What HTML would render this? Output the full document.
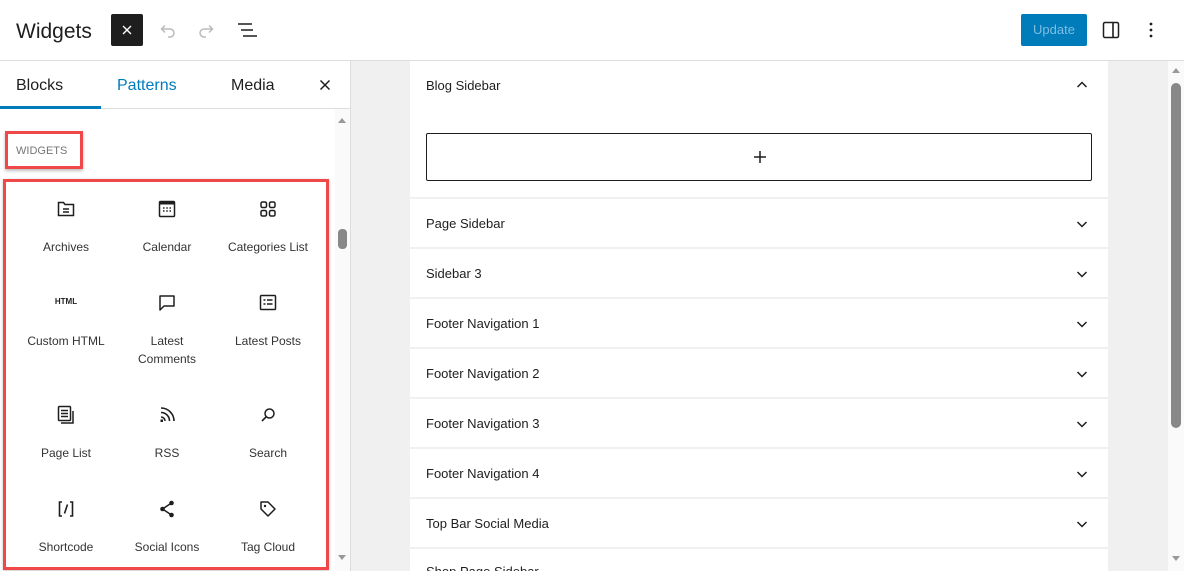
<!DOCTYPE html>
<html><head><style>
*{box-sizing:border-box;margin:0;padding:0}
body{width:1184px;height:571px;overflow:hidden;font-family:"Liberation Sans",sans-serif;background:#fff;position:relative;color:#1e1e1e}
.abs{position:absolute}
.hdr{left:0;top:0;width:1184px;height:61px;border-bottom:1px solid #ddd;background:#fff}
.tab{position:absolute;top:77px;font-size:16px}
.item{position:absolute;width:100px;text-align:center;font-size:12px;color:#333;line-height:18px}
.item svg{display:block;margin:0 auto}
.sec{position:absolute;left:410px;width:698px;height:48px;background:#fff;font-size:13px;color:#1e1e1e}
.sec span{position:absolute;left:16px;top:17px}
.sec svg{position:absolute;right:20px;top:19px}
</style></head><body>
<div class="abs hdr"></div>
<div class="abs" style="left:16px;top:20px;font-size:21px;color:#1e1e1e">Widgets</div>
<div class="abs" style="left:111px;top:14px;width:32px;height:32px;background:#1e1e1e;border-radius:2px"><svg width="32" height="32"><path d="M12 12l8 8M20 12l-8 8" stroke="#fff" stroke-width="1.4"/></svg></div>
<svg class="abs" style="left:156px;top:20px" width="22" height="22"><path d="M6 9h8a4 4 0 010 8h-2M9 5.5L5.5 9 9 12.5" fill="none" stroke="#bbb" stroke-width="1.5"/></svg>
<svg class="abs" style="left:196px;top:20px" width="22" height="22"><path d="M16 9H8a4 4 0 000 8h2M13 5.5L16.5 9 13 12.5" fill="none" stroke="#bbb" stroke-width="1.5"/></svg>
<svg class="abs" style="left:236px;top:20px" width="22" height="22"><path d="M2 4h14M5 10h12M7 16h14" stroke="#1e1e1e" stroke-width="1.6"/></svg>
<div class="abs" style="left:1021px;top:14px;width:66px;height:32px;background:#007cba;border-radius:2px;color:#7fbde2;font-size:13px;text-align:center;line-height:32px">Update</div>
<svg class="abs" style="left:1101px;top:20px" width="20" height="20"><rect x="2.5" y="2.5" width="15" height="15" rx="1.5" fill="none" stroke="#1e1e1e" stroke-width="1.5"/><path d="M12 2.5v15" stroke="#1e1e1e" stroke-width="1.6"/></svg>
<svg class="abs" style="left:1145px;top:20px" width="12" height="20"><circle cx="6" cy="4" r="1.4" fill="#1e1e1e"/><circle cx="6" cy="10" r="1.4" fill="#1e1e1e"/><circle cx="6" cy="16" r="1.4" fill="#1e1e1e"/></svg>

<div class="abs" style="left:350px;top:61px;width:1px;height:510px;background:#ddd"></div>
<div class="tab" style="left:16px">Blocks</div>
<div class="tab" style="left:117px;color:#007cba">Patterns</div>
<div class="tab" style="left:231px">Media</div>
<svg class="abs" style="left:319px;top:79px" width="12" height="12"><path d="M1.5 1.5l9 9M10.5 1.5l-9 9" stroke="#1e1e1e" stroke-width="1.5"/></svg>
<div class="abs" style="left:0;top:108px;width:350px;height:1px;background:#ddd"></div>
<div class="abs" style="left:0;top:106px;width:101px;height:3px;background:#007cba"></div>
<div class="abs" style="left:335px;top:109px;width:15px;height:462px;background:#fafafa"></div>
<div class="abs" style="left:338px;top:118px;width:0;height:0;border-left:4px solid transparent;border-right:4px solid transparent;border-bottom:5px solid #999"></div>
<div class="abs" style="left:338px;top:555px;width:0;height:0;border-left:4px solid transparent;border-right:4px solid transparent;border-top:5px solid #999"></div>
<div class="abs" style="left:338px;top:229px;width:9px;height:20px;background:#888;border-radius:4px"></div>

<div class="abs" style="left:5px;top:131px;width:78px;height:38px;border:3px solid #f04848;box-shadow:0 2px 3px rgba(0,0,0,.25)"></div>
<div class="abs" style="left:16px;top:145px;font-size:11px;color:#757575">WIDGETS</div>
<div class="abs" style="left:3px;top:179px;width:326px;height:391px;border:3px solid #f04848;box-shadow:0 1px 3px rgba(0,0,0,.25)"></div>

<div class="item" style="left:16px;top:197px"><svg width="24" height="24"><path d="M4.5 5.5h5l1.5 2h8.5v11h-15z" fill="none" stroke="#1e1e1e" stroke-width="1.5"/><path d="M9 12h6M9 15h6" stroke="#1e1e1e" stroke-width="1.5"/></svg><div style="margin-top:17px">Archives</div></div>
<div class="item" style="left:117px;top:197px"><svg width="24" height="24"><rect x="4.5" y="4.5" width="15" height="15" rx="1" fill="none" stroke="#1e1e1e" stroke-width="1.5"/><rect x="4.5" y="4.5" width="15" height="3" fill="#1e1e1e"/><path d="M8 11h1.5M11.3 11h1.5M14.5 11h1.5M8 14h1.5M11.3 14h1.5M14.5 14h1.5" stroke="#1e1e1e" stroke-width="1.5"/></svg><div style="margin-top:17px">Calendar</div></div>
<div class="item" style="left:218px;top:197px"><svg width="24" height="24"><rect x="5" y="5" width="5.5" height="5.5" rx="1.5" fill="none" stroke="#1e1e1e" stroke-width="1.5"/><rect x="13.5" y="5" width="5.5" height="5.5" rx="1.5" fill="none" stroke="#1e1e1e" stroke-width="1.5"/><rect x="5" y="13.5" width="5.5" height="5.5" rx="1.5" fill="none" stroke="#1e1e1e" stroke-width="1.5"/><rect x="13.5" y="13.5" width="5.5" height="5.5" rx="1.5" fill="none" stroke="#1e1e1e" stroke-width="1.5"/></svg><div style="margin-top:17px">Categories List</div></div>

<div class="item" style="left:16px;top:291px"><div style="height:24px;font-size:8px;font-weight:bold;line-height:22px;color:#1e1e1e">HTML</div><div style="margin-top:17px">Custom HTML</div></div>
<div class="item" style="left:117px;top:291px"><svg width="24" height="24"><path d="M5 5h14v10H9l-4 4z" fill="none" stroke="#1e1e1e" stroke-width="1.5" stroke-linejoin="round"/></svg><div style="margin-top:17px">Latest<br>Comments</div></div>
<div class="item" style="left:218px;top:291px"><svg width="24" height="24"><rect x="4.5" y="4.5" width="15" height="14" rx="1" fill="none" stroke="#1e1e1e" stroke-width="1.5"/><path d="M7.5 9h2M11 9h5.5M7.5 13h2M11 13h5.5" stroke="#1e1e1e" stroke-width="1.5"/></svg><div style="margin-top:17px">Latest Posts</div></div>

<div class="item" style="left:16px;top:403px"><svg width="24" height="24"><rect x="4.5" y="3.5" width="12" height="14" rx="1" fill="none" stroke="#1e1e1e" stroke-width="1.5"/><path d="M7 7.5h7M7 10.5h7M7 13.5h7M19 8v12H7" fill="none" stroke="#1e1e1e" stroke-width="1.5"/></svg><div style="margin-top:17px">Page List</div></div>
<div class="item" style="left:117px;top:403px"><svg width="24" height="24"><path d="M6 5a13 13 0 0113 13M6 9.5a8.5 8.5 0 018.5 8.5M6 14a4 4 0 014 4" fill="none" stroke="#1e1e1e" stroke-width="1.6"/><rect x="5.5" y="16.5" width="2.5" height="2.5" fill="#1e1e1e"/></svg><div style="margin-top:17px">RSS</div></div>
<div class="item" style="left:218px;top:403px"><svg width="24" height="24"><circle cx="13.5" cy="10.5" r="4.5" fill="none" stroke="#1e1e1e" stroke-width="1.5"/><path d="M10.3 13.7L6 18" stroke="#1e1e1e" stroke-width="1.6"/></svg><div style="margin-top:17px">Search</div></div>

<div class="item" style="left:16px;top:497px"><svg width="24" height="24"><path d="M8 5H5.5v14H8M16 5h2.5v14H16M13.5 7.5l-3 9" fill="none" stroke="#1e1e1e" stroke-width="1.6"/></svg><div style="margin-top:17px">Shortcode</div></div>
<div class="item" style="left:117px;top:497px"><svg width="24" height="24"><path d="M16.5 6L7.5 12l9 6" fill="none" stroke="#1e1e1e" stroke-width="1.5"/><circle cx="16.5" cy="6" r="2.3" fill="#1e1e1e"/><circle cx="7.5" cy="12" r="2.3" fill="#1e1e1e"/><circle cx="16.5" cy="18" r="2.3" fill="#1e1e1e"/></svg><div style="margin-top:17px">Social Icons</div></div>
<div class="item" style="left:218px;top:497px"><svg width="24" height="24"><path d="M5 5h7l7 7-7 7-7-7z" fill="none" stroke="#1e1e1e" stroke-width="1.5" stroke-linejoin="round"/><circle cx="9" cy="9" r="1.2" fill="#1e1e1e"/></svg><div style="margin-top:17px">Tag Cloud</div></div>

<div class="abs" style="left:351px;top:61px;width:817px;height:510px;background:#f0f0f0"></div>
<div class="abs" style="left:1168px;top:61px;width:16px;height:510px;background:#fafafa"></div>
<div class="abs" style="left:1172px;top:68px;width:0;height:0;border-left:4px solid transparent;border-right:4px solid transparent;border-bottom:5px solid #999"></div>
<div class="abs" style="left:1172px;top:556px;width:0;height:0;border-left:4px solid transparent;border-right:4px solid transparent;border-top:5px solid #999"></div>
<div class="abs" style="left:1171px;top:83px;width:10px;height:345px;background:#888;border-radius:5px"></div>

<div class="sec" style="top:61px;height:136px"><span style="top:17px">Blog Sidebar</span><svg width="12" height="12" style="top:18px"><path d="M1.5 8l4.5-4.5L10.5 8" fill="none" stroke="#1e1e1e" stroke-width="1.5"/></svg>
<div style="position:absolute;left:16px;top:72px;width:666px;height:48px;border:1px solid #1e1e1e;border-radius:2px"><svg width="14" height="14" style="position:absolute;left:326px;top:16px"><path d="M7 1v12M1 7h12" stroke="#1e1e1e" stroke-width="1.5"/></svg></div></div>

<div class="sec" style="top:199px"><span>Page Sidebar</span><svg width="12" height="12"><path d="M1.5 4l4.5 4.5L10.5 4" fill="none" stroke="#1e1e1e" stroke-width="1.5"/></svg></div>
<div class="sec" style="top:249px"><span>Sidebar 3</span><svg width="12" height="12"><path d="M1.5 4l4.5 4.5L10.5 4" fill="none" stroke="#1e1e1e" stroke-width="1.5"/></svg></div>
<div class="sec" style="top:299px"><span>Footer Navigation 1</span><svg width="12" height="12"><path d="M1.5 4l4.5 4.5L10.5 4" fill="none" stroke="#1e1e1e" stroke-width="1.5"/></svg></div>
<div class="sec" style="top:349px"><span>Footer Navigation 2</span><svg width="12" height="12"><path d="M1.5 4l4.5 4.5L10.5 4" fill="none" stroke="#1e1e1e" stroke-width="1.5"/></svg></div>
<div class="sec" style="top:399px"><span>Footer Navigation 3</span><svg width="12" height="12"><path d="M1.5 4l4.5 4.5L10.5 4" fill="none" stroke="#1e1e1e" stroke-width="1.5"/></svg></div>
<div class="sec" style="top:449px"><span>Footer Navigation 4</span><svg width="12" height="12"><path d="M1.5 4l4.5 4.5L10.5 4" fill="none" stroke="#1e1e1e" stroke-width="1.5"/></svg></div>
<div class="sec" style="top:499px"><span>Top Bar Social Media</span><svg width="12" height="12"><path d="M1.5 4l4.5 4.5L10.5 4" fill="none" stroke="#1e1e1e" stroke-width="1.5"/></svg></div>
<div class="sec" style="top:549px;height:22px;overflow:hidden"><span style="top:15px">Shop Page Sidebar</span></div>
</body></html>
